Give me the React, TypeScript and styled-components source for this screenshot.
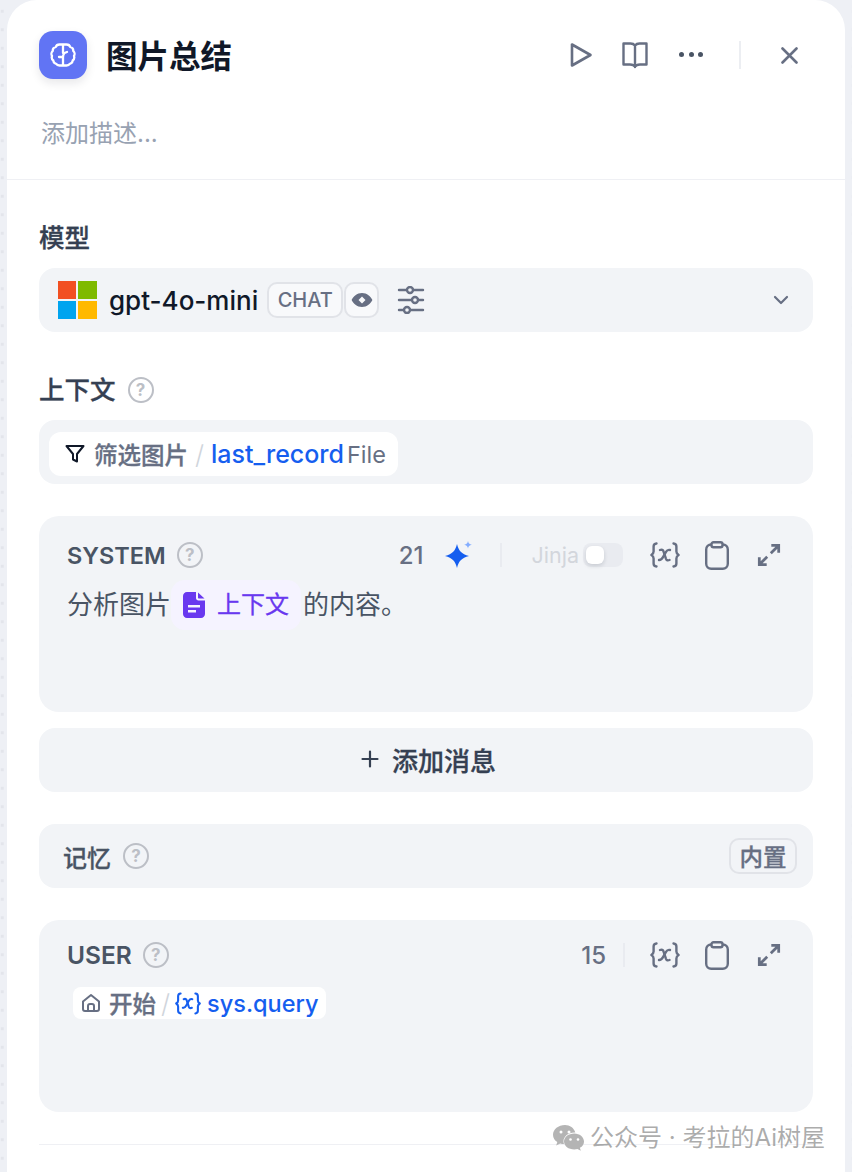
import React from 'react';
import styled, { createGlobalStyle } from 'styled-components';

const GlobalStyle = createGlobalStyle`
  html, body {
    margin: 0;
    padding: 0;
    height: 100%;
  }
  body {
    font-family: Inter, "Noto Sans CJK SC", sans-serif;
    -webkit-font-smoothing: antialiased;
  }
  * {
    box-sizing: border-box;
  }
`;

const HelpIcon = ({ size = 26 }: { size?: number }) => (
  <HelpCircle $size={size}>?</HelpCircle>
);

const VarIcon = ({ color = '#676f83', width = 30, height = 26 }: { color?: string; width?: number; height?: number }) => (
  <svg width={width} height={height} viewBox="0 0 30 26" fill="none" stroke={color} strokeWidth="2.400" strokeLinecap="round" strokeLinejoin="round">
    <path d="M6.500 1.500C4.300 1.700 3.600 2.700 3.600 4.500v5c0 1.600-.7 2.600-2.200 3.500 1.500.9 2.200 1.900 2.200 3.500v5c0 1.800.7 2.800 2.900 3" />
    <path d="M23.500 1.500c2.200.2 2.900 1.200 2.900 3v5c0 1.600.7 2.600 2.200 3.500-1.500.9-2.200 1.900-2.200 3.500v5c0 1.800-.7 2.800-2.900 3" />
    <path d="M10 8c1.800-.7 3-.2 3.500 1.400l2.500 7.400c.6 1.600 1.800 1.900 3.500 1.200" />
    <path d="M20 8c-1.700-.5-3 .2-4 1.900l-3 5.300c-1 1.800-2.300 2.900-4 2.800" />
  </svg>
);

const ClipboardIcon = () => (
  <svg width="24" height="29" viewBox="0 0 24 29" fill="none" stroke="#676f83" strokeWidth="2.400" strokeLinejoin="round">
    <rect x="1.200" y="3.500" width="21.600" height="24.300" rx="5" />
    <rect x="6.500" y="1.200" width="11" height="5" rx="2" fill="#f2f4f7" />
  </svg>
);

const PromptTools = () => (
  <>
    <VarIcon />
    <ClipboardIcon />
    <ExpandSvg width="24" height="24" viewBox="0 0 26 26" fill="#676f83">
      <path d="M15.500 1H25v9.500h-3V6.100l-6 6-2.100-2.100 6-6h-4.400z" />
      <path d="M10.500 25H1v-9.500h3v4.400l6-6 2.100 2.100-6 6h4.400z" />
    </ExpandSvg>
  </>
);

const App: React.FC = () => {
  return (
    <Page>
      <GlobalStyle />
      <Panel>
        <Header>
          <TitleRow>
            <NodeIcon>
              <svg width="26" height="26" viewBox="0 0 26 26" fill="none" stroke="#fff" strokeWidth="2.300" strokeLinecap="round" strokeLinejoin="round">
                <path d="M9.500 2.500c-2 0-3.300 1-3.700 2.500C3.800 5.500 2.600 7 2.800 8.800 1.400 10 1 12.500 2 14c-.6 1.800 0 3.500 1.300 4.500.2 1.900 1.300 3 2.900 3.300.6 1.100 1.800 1.700 3.300 1.700h7c1.500 0 2.700-.6 3.300-1.700 1.600-.3 2.700-1.400 2.900-3.300 1.300-1 1.900-2.700 1.300-4.500 1-1.500.6-4-.8-5.200.2-1.800-1-3.300-3-3.800-.4-1.500-1.700-2.500-3.700-2.500z" />
                <path d="M13 3v8M13 15v8M13 15H9M13 15c0-2 .8-3 1.500-4l2.500-1" />
              </svg>
            </NodeIcon>
            <Title>图片总结</Title>
            <HeaderActions>
              <PlaySvg width="24" height="26" viewBox="0 0 24 26" fill="none" stroke="#676f83" strokeWidth="2.600" strokeLinejoin="round">
                <path d="M3 2.500v21L21.500 13z" />
              </PlaySvg>
              <svg width="28" height="28" viewBox="0 0 28 28" fill="none" stroke="#676f83" strokeWidth="2.400" strokeLinejoin="round" strokeLinecap="round">
                <path d="M14 4.500C13 3.200 11.500 2.500 9.500 2.500H2.500v21H9c2.500 0 4.200.7 5 2.200.8-1.500 2.500-2.200 5-2.200h6.500v-21h-7c-2 0-3.500.7-4.500 2zM14 4.500V26" />
              </svg>
              <Dots>
                <i />
                <i />
                <i />
              </Dots>
              <HeaderDivider />
              <svg width="17" height="17" viewBox="0 0 17 17" fill="none" stroke="#676f83" strokeWidth="2.600" strokeLinecap="round">
                <path d="M1.500 1.500l14 14M15.500 1.500l-14 14" />
              </svg>
            </HeaderActions>
          </TitleRow>
          <Description>添加描述...</Description>
        </Header>
        <Body>
          <Field>
            <FieldLabel>模型</FieldLabel>
            <GrayRow>
              <MsLogo>
                <i style={{ background: '#f25022' }} />
                <i style={{ background: '#7fba00' }} />
                <i style={{ background: '#00a4ef' }} />
                <i style={{ background: '#ffb900' }} />
              </MsLogo>
              <ModelName>gpt-4o-mini</ModelName>
              <Badges>
                <Badge>CHAT</Badge>
                <Badge $icon>
                  <svg width="22" height="16" viewBox="0 0 22 16">
                    <path fillRule="evenodd" fill="#676f83" d="M11 1c5 0 8.800 3.400 10.400 7C19.800 11.600 16 15 11 15S2.200 11.600.6 8C2.200 4.400 6 1 11 1zm0 3.500L7.500 8l3.500 3.500L14.500 8z" />
                  </svg>
                </Badge>
              </Badges>
              <SlidersIcon width="28" height="28" viewBox="0 0 28 28" fill="none" stroke="#676f83" strokeWidth="2.400" strokeLinecap="round">
                <path d="M2 4h7M17 4h9M2 14h12M22 14h4M2 24h4M14 24h12" />
                <circle cx="13" cy="4" r="3" />
                <circle cx="18" cy="14" r="3" />
                <circle cx="10" cy="24" r="3" />
              </SlidersIcon>
              <Chevron width="16" height="10" viewBox="0 0 16 10" fill="none" stroke="#676f83" strokeWidth="2.200" strokeLinecap="round" strokeLinejoin="round">
                <path d="M2 2l6 6 6-6" />
              </Chevron>
            </GrayRow>
          </Field>

          <Field>
            <FieldLabel>
              上下文
              <HelpIcon />
            </FieldLabel>
            <ContextRow>
              <VarChip>
                <svg width="20" height="20" viewBox="0 0 20 20" fill="none" stroke="#101828" strokeWidth="2" strokeLinejoin="round">
                  <path d="M1.500 2h17l-6.500 8v7.500l-4-2V10z" />
                </svg>
                <ChipNode $gap={9}>筛选图片</ChipNode>
                <ChipSlash $gap={7}>/</ChipSlash>
                <ChipVar>last_record</ChipVar>
                <ChipType>File</ChipType>
              </VarChip>
            </ContextRow>
          </Field>

          <Stack>
            <PromptCard>
              <PromptHeader>
                <PromptRole>
                  SYSTEM
                  <HelpIcon />
                </PromptRole>
                <PromptToolbar>
                  <CharCount>21</CharCount>
                  <Sparkle width="28" height="28" viewBox="0 0 28 28">
                    <path fill="#155eef" d="M12 3c1.500 6.500 4.500 10 12 12-7.500 2-10.500 5.500-12 12-1.500-6.500-4.500-10-12-12 7.500-2 10.500-5.500 12-12z" />
                    <path fill="#84adff" d="M23 0c.4 2.300 1.400 3.300 3.800 3.800-2.400.5-3.400 1.500-3.800 3.800-.4-2.300-1.400-3.300-3.800-3.800C21.600 3.300 22.600 2.300 23 0z" />
                  </Sparkle>
                  <ToolDivider />
                  <JinjaGroup>
                    <JinjaLabel>Jinja</JinjaLabel>
                    <Toggle>
                      <ToggleKnob />
                    </Toggle>
                  </JinjaGroup>
                  <IconGroup>
                    <PromptTools />
                  </IconGroup>
                </PromptToolbar>
              </PromptHeader>
              <PromptText>
                分析图片
                <ContextTag>
                  <svg width="22" height="26" viewBox="0 0 22 26">
                    <path fill="#6938ef" fillRule="evenodd" d="M4 0h9v6c0 1.500 1 2.500 2.500 2.500H22V22c0 2.200-1.800 4-4 4H4c-2.200 0-4-1.800-4-4V4c0-2.200 1.800-4 4-4zm11 .5L21.500 6.500H16c-.6 0-1-.4-1-1zM5 13v2.400h12V13zm0 5v2.400h8V18z" />
                  </svg>
                  上下文
                </ContextTag>
                的内容。
              </PromptText>
            </PromptCard>
            <AddMessage>
              <svg width="18" height="18" viewBox="0 0 18 18" stroke="#354052" strokeWidth="2.200" strokeLinecap="round">
                <path d="M9 1.500v15M1.500 9h15" />
              </svg>
              添加消息
            </AddMessage>
          </Stack>

          <MemoryRow>
            <MemoryLabel>
              记忆
              <HelpIcon />
            </MemoryLabel>
            <BuiltinBadge>内置</BuiltinBadge>
          </MemoryRow>

          <UserCard>
            <PromptHeader>
              <UserRole>
                USER
                <HelpIcon />
              </UserRole>
              <PromptToolbar>
                <CharCount>15</CharCount>
                <ToolDivider $short />
                <IconGroup>
                  <PromptTools />
                </IconGroup>
              </PromptToolbar>
            </PromptHeader>
            <UserChip>
              <svg width="20" height="20" viewBox="0 0 20 20" fill="none" stroke="#676f83" strokeWidth="2" strokeLinejoin="round" strokeLinecap="round">
                <path d="M2 8.500L10 2l8 6.500V16c0 1.200-.8 2-2 2H4c-1.200 0-2-.8-2-2z" />
                <path d="M7 18v-5c0-1.200.8-2 2-2h2c1.200 0 2 .8 2 2v5" />
              </svg>
              <ChipNode $gap={8}>开始</ChipNode>
              <ChipSlash $gap={5}>/</ChipSlash>
              <VarIcon color="#155eef" width={26} height={23} />
              <UserVar>sys.query</UserVar>
            </UserChip>
          </UserCard>

          <BottomDivider />
        </Body>
        <Watermark>
          <svg width="32" height="26" viewBox="0 0 32 26">
            <path fill="#b4b4b4" d="M12 0C5.400 0 0 4.300 0 9.700c0 3 1.700 5.600 4.300 7.400L3.200 20.500l4-2.100c1.300.4 2.500.7 3.800.7-.3-.9-.5-1.800-.5-2.800 0-5 4.800-8.900 10.800-8.900h1C21 3 16.900 0 12 0z" />
            <path fill="#b4b4b4" d="M21.300 8.400c-5.800 0-10.300 3.600-10.300 8s4.500 8 10.300 8c1.100 0 2.200-.2 3.200-.5l3.300 1.800-.9-2.900c2.500-1.400 4.100-3.700 4.100-6.400 0-4.400-4.500-8-9.700-8z" />
            <circle cx="8" cy="7" r="1.500" fill="#fff" />
            <circle cx="16" cy="7" r="1.500" fill="#fff" />
            <circle cx="17.500" cy="14.500" r="1.300" fill="#fff" />
            <circle cx="25" cy="14.500" r="1.300" fill="#fff" />
          </svg>
          公众号 · 考拉的Ai树屋
        </Watermark>
      </Panel>
    </Page>
  );
};

const Page = styled.div`
  width: 852px;
  height: 1172px;
  overflow: hidden;
  padding: 0 7px;
  background-color: #eef0f5;
  background-image: radial-gradient(circle, #e3e5eb 1.500px, transparent 1.600px);
  background-size: 18.500px 18.500px;
  background-position: -7px 2px;
`;

const Panel = styled.div`
  position: relative;
  width: 838px;
  height: 1172px;
  overflow: hidden;
  background: #fff;
  border-radius: 30px 30px 0 0;
`;

const Header = styled.header`
  height: 180px;
  padding: 31px 32px 0;
  border-bottom: 1px solid #eff0f4;
`;

const TitleRow = styled.div`
  display: flex;
  align-items: center;
  height: 48px;
`;

const NodeIcon = styled.div`
  display: flex;
  align-items: center;
  justify-content: center;
  width: 48px;
  height: 48px;
  border-radius: 14px;
  background: #6174f4;
  box-shadow: 0 4px 10px rgba(16, 24, 40, 0.1);
`;

const Title = styled.h1`
  margin: 3px 0 0 19px;
  font-size: 31.500px;
  line-height: 48px;
  font-weight: 700;
  color: #101828;
`;

const HeaderActions = styled.div`
  display: flex;
  align-items: center;
  margin-left: auto;
  margin-right: 15px;
  gap: 30px;
`;

const PlaySvg = styled.svg`
  margin-right: -2px;
`;

const Dots = styled.div`
  display: flex;
  gap: 4.500px;
  margin-bottom: 1px;

  i {
    display: block;
    width: 5px;
    height: 5px;
    border-radius: 50%;
    background: #495464;
  }
`;

const HeaderDivider = styled.div`
  width: 2px;
  height: 28px;
  margin-left: 6px;
  margin-right: 10px;
  background: #eceef2;
`;

const Description = styled.div`
  margin: 37px 0 0 2px;
  font-size: 24px;
  line-height: 36px;
  color: #98a2b2;
`;

const Body = styled.main`
  display: flex;
  flex-direction: column;
  gap: 32px;
  padding: 40px 32px 0;
`;

const Field = styled.section`
  display: flex;
  flex-direction: column;
  gap: 12px;

  & + & {
    margin-top: 8px;
  }
`;

const FieldLabel = styled.div`
  display: flex;
  align-items: center;
  gap: 12px;
  height: 36px;
  font-size: 25.500px;
  line-height: 36px;
  font-weight: 500;
  -webkit-text-stroke: 0.3px #354052;
  color: #354052;
`;

const HelpCircle = styled.span<{ $size: number }>`
  display: inline-flex;
  align-items: center;
  justify-content: center;
  width: ${p => p.$size}px;
  height: ${p => p.$size}px;
  border: 2.500px solid #bcbfc6;
  border-radius: 50%;
  font-size: 17px;
  font-weight: 700;
  line-height: 1;
  color: #bcbfc6;
  -webkit-text-stroke: 0;
`;

const GrayRow = styled.div`
  display: flex;
  align-items: center;
  height: 64px;
  padding: 0 24px 0 19px;
  background: #f2f4f7;
  border-radius: 16px;
`;

const MsLogo = styled.div`
  display: grid;
  grid-template-columns: 18px 19px;
  grid-template-rows: 18px 18px;
  gap: 2px;
  margin-right: 12px;

  i {
    display: block;
  }
`;

const ModelName = styled.span`
  font-size: 26px;
  font-weight: 500;
  color: #101828;
`;

const Badges = styled.div`
  display: flex;
  margin-left: 9px;
  gap: 1px;
`;

const Badge = styled.span<{ $icon?: boolean }>`
  display: flex;
  align-items: center;
  justify-content: center;
  height: 36px;
  width: ${p => (p.$icon ? '35px' : '76px')};
  border: 2px solid #e1e3e8;
  border-radius: 10px;
  background: #f8f9fb;
  font-size: 20px;
  font-weight: 500;
  color: #676f83;
`;

const SlidersIcon = styled.svg`
  margin-left: 18px;
`;

const Chevron = styled.svg`
  margin-left: auto;
`;

const ContextRow = styled.div`
  display: flex;
  align-items: center;
  height: 64px;
  padding: 4px 10px 0;
  background: #f2f4f7;
  border-radius: 16px;
`;

const VarChip = styled.div`
  display: flex;
  align-items: center;
  height: 44px;
  padding: 0 12px 0 16px;
  background: #fff;
  border-radius: 12px;
`;

const ChipNode = styled.span<{ $gap: number }>`
  margin-left: ${p => p.$gap}px;
  font-size: 23.500px;
  font-weight: 500;
  -webkit-text-stroke: 0.3px #676f83;
  color: #676f83;
`;

const ChipSlash = styled.span<{ $gap: number }>`
  margin: 0 ${p => p.$gap}px;
  font-size: 26px;
  font-weight: 300;
  color: #d0d5dc;
`;

const ChipVar = styled.span`
  font-size: 25px;
  font-weight: 500;
  color: #155eef;
`;

const ChipType = styled.span`
  margin-left: 3px;
  font-size: 23.500px;
  color: #676f83;
`;

const Stack = styled.div`
  display: flex;
  flex-direction: column;
  gap: 16px;
`;

const PromptCard = styled.section`
  height: 196px;
  padding: 21px 28px 0;
  background: #f2f4f7;
  border-radius: 20px;
`;

const PromptHeader = styled.div`
  display: flex;
  align-items: center;
  justify-content: space-between;
  height: 36px;
`;

const PromptRole = styled.div`
  display: flex;
  align-items: center;
  gap: 11px;
  font-size: 23.500px;
  font-weight: 600;
  color: #495464;
`;

const UserRole = styled(PromptRole)`
  font-size: 24.500px;
`;

const PromptToolbar = styled.div`
  display: flex;
  align-items: center;
  margin-right: 4px;
`;

const CharCount = styled.span`
  font-size: 24px;
  font-weight: 500;
  color: #676f83;
`;

const Sparkle = styled.svg`
  margin-left: 21px;
`;

const ToolDivider = styled.span<{ $short?: boolean }>`
  display: block;
  width: 2px;
  height: 24px;
  margin: ${p => (p.$short ? '0 25px 0 17px' : '0 30px 0 27px')};
  background: #e9ebf0;
`;

const JinjaGroup = styled.div`
  display: flex;
  align-items: center;
  gap: 4px;
  margin-right: 27px;
`;

const JinjaLabel = styled.span`
  font-size: 21.500px;
  font-weight: 400;
  color: #d3d6dc;
`;

const Toggle = styled.span`
  display: flex;
  align-items: center;
  width: 40px;
  height: 24px;
  padding-left: 3px;
  border-radius: 8px;
  background: #e9ebf0;
`;

const ToggleKnob = styled.span`
  display: block;
  width: 18px;
  height: 18px;
  border-radius: 6px;
  background: #fff;
  box-shadow: 0 2px 4px rgba(16, 24, 40, 0.15);
`;

const IconGroup = styled.div`
  display: flex;
  align-items: center;
  gap: 25px;
`;

const ExpandSvg = styled.svg`
  margin-left: 3px;
`;

const PromptText = styled.div`
  display: flex;
  align-items: center;
  margin-top: 7px;
  font-size: 26px;
  line-height: 44px;
  color: #495464;
`;

const ContextTag = styled.span`
  display: inline-flex;
  align-items: center;
  gap: 12px;
  height: 50px;
  margin: 0 2px 0 0;
  padding: 0 12px;
  border-radius: 14px;
  background: #f5f3ff;
  color: #6938ef;
  font-size: 24px;
  -webkit-text-stroke: 0.3px #6938ef;
`;

const AddMessage = styled.button`
  display: flex;
  align-items: center;
  justify-content: center;
  gap: 13px;
  height: 64px;
  padding: 0 0 2px 5px;
  border: none;
  border-radius: 16px;
  background: #f2f4f7;
  font-family: inherit;
  font-size: 26px;
  font-weight: 500;
  -webkit-text-stroke: 0.3px #354052;
  color: #354052;
`;

const MemoryRow = styled.section`
  display: flex;
  align-items: center;
  justify-content: space-between;
  height: 64px;
  padding: 0 16px 0 24px;
  background: #f2f4f7;
  border-radius: 16px;
`;

const MemoryLabel = styled.div`
  display: flex;
  align-items: center;
  gap: 12px;
  font-size: 24px;
  font-weight: 500;
  -webkit-text-stroke: 0.3px #495464;
  color: #495464;
`;

const BuiltinBadge = styled.span`
  display: flex;
  align-items: center;
  justify-content: center;
  width: 68px;
  height: 36px;
  border: 2px solid #e1e3e8;
  border-radius: 10px;
  font-size: 23.500px;
  font-weight: 500;
  -webkit-text-stroke: 0.3px #676f83;
  color: #676f83;
`;

const UserCard = styled.section`
  height: 192px;
  padding: 17px 28px 0;
  background: #f2f4f7;
  border-radius: 20px;
`;

const UserChip = styled.div`
  display: inline-flex;
  align-items: center;
  height: 32px;
  margin: 14px 0 0 6px;
  padding: 0 8px 0 8px;
  border-radius: 8px;
  background: #fff;
`;

const UserVar = styled.span`
  margin-left: 6px;
  font-size: 23.500px;
  font-weight: 500;
  color: #155eef;
`;

const BottomDivider = styled.div`
  height: 1px;
  background: #eff0f4;
`;

const Watermark = styled.div`
  position: absolute;
  right: 20px;
  bottom: 18px;
  display: flex;
  align-items: center;
  gap: 5px;
  font-size: 24px;
  line-height: 32px;
  color: rgba(140, 140, 140, 0.72);
`;

export default App;
